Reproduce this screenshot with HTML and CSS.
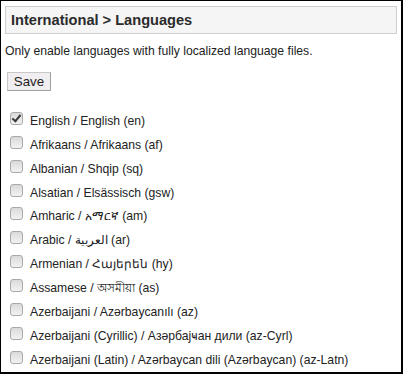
FILE: index.html
```html
<!DOCTYPE html>
<html>
<head>
<meta charset="utf-8">
<link rel="stylesheet" href="styles.css">
</head>
<body>
<div class="frame">
  <h2 class="title">International &gt; Languages</h2>
  <p class="note">Only enable languages with fully localized language files.</p>
  <button class="save">Save</button>
  <ul class="langs">
    <li><input type="checkbox" checked><span>English / English (en)</span></li>
    <li><input type="checkbox"><span>Afrikaans / Afrikaans (af)</span></li>
    <li><input type="checkbox"><span>Albanian / Shqip (sq)</span></li>
    <li><input type="checkbox"><span>Alsatian / Elsässisch (gsw)</span></li>
    <li><input type="checkbox"><span>Amharic / አማርኛ (am)</span></li>
    <li><input type="checkbox"><span>Arabic / العربية (ar)</span></li>
    <li><input type="checkbox"><span>Armenian / Հայերեն (hy)</span></li>
    <li><input type="checkbox"><span>Assamese / অসমীয়া (as)</span></li>
    <li><input type="checkbox"><span>Azerbaijani / Azərbaycanılı (az)</span></li>
    <li><input type="checkbox"><span>Azerbaijani (Cyrillic) / Азәрбајҹан дили (az-Cyrl)</span></li>
    <li><input type="checkbox"><span>Azerbaijani (Latin) / Azərbaycan dili (Azərbaycan) (az-Latn)</span></li>
  </ul>
</div>
</body>
</html>
```

FILE: styles.css
```css
html, body {
  margin: 0;
  padding: 0;
  background: #fff;
}
body {
  font-family: "Liberation Sans", Arial, "Noto Sans", sans-serif;
  font-size: 12.2px;
  color: #222;
}
.frame {
  box-sizing: border-box;
  width: 403px;
  height: 374px;
  border-style: solid;
  border-color: #000;
  border-width: 1px 2px 2px 1px;
  overflow: hidden;
}
.title {
  margin: 5px 4px 0 4px;
  height: 26px;
  line-height: 26px;
  padding: 0 0 0 5px;
  border: 1px solid #cfcfcf;
  background: #f5f5f5;
  font-size: 14.6px;
  font-weight: bold;
  color: #2b2b2b;
}
.note {
  margin: 10px 0 0 4px;
  line-height: 15px;
}
.save {
  display: block;
  margin: 13px 0 0 6px;
  height: 19px;
  width: 44px;
  padding: 0;
  font-family: inherit;
  font-size: 13.3px;
  color: #1e1e1e;
  background: #f1eef1;
  border: 1px solid #c8c8c8;
  border-right-color: #a0a0a0;
  border-bottom-color: #a0a0a0;
  border-radius: 0;
}
.langs {
  list-style: none;
  margin: 21px 0 0 0;
  padding: 0 0 0 9px;
}
.langs li {
  display: flex;
  align-items: flex-start;
  gap: 7px;
  height: 23.87px;
}
.langs span {
  margin-top: 2px;
  line-height: 15px;
  white-space: nowrap;
}
.langs input {
  appearance: none;
  -webkit-appearance: none;
  margin: 0;
  width: 13px;
  height: 13px;
  box-sizing: border-box;
  border: 1px solid #a9a9a9;
  border-radius: 3px;
  background: linear-gradient(#d9d9d9, #f3f3f3);
  position: relative;
  flex: none;
}
.langs input:checked::after {
  content: "";
  position: absolute;
  left: 3px;
  top: 0;
  width: 3px;
  height: 7px;
  border: solid #3a3a3a;
  border-width: 0 2px 2px 0;
  transform: rotate(40deg);
}
```
